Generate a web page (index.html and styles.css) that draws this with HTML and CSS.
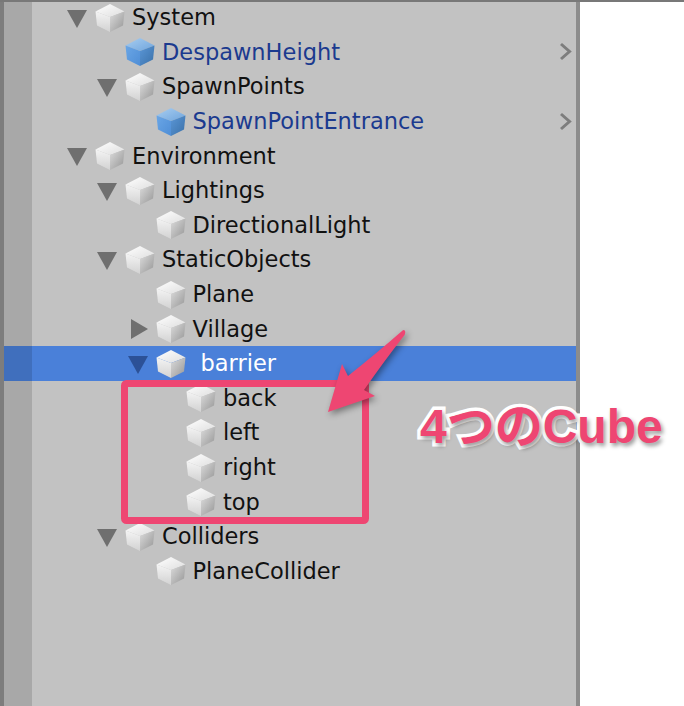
FILE: index.html
```html
<!DOCTYPE html>
<html lang="en">
<head>
    <meta charset="UTF-8">
    <meta name="viewport" content="width=device-width, initial-scale=1.0">
    <title>Hierarchy</title>
    <link rel="stylesheet" href="styles.css">
</head>
<body>
    <svg class="defs" width="0" height="0">
        <defs>
            <linearGradient id="top-grey" x1="0" y1="0" x2="1" y2="1">
                <stop offset="0" stop-color="#ffffff"/>
                <stop offset="1" stop-color="#dedede"/>
            </linearGradient>
            <linearGradient id="left-grey" x1="0" y1="0" x2="0" y2="1">
                <stop offset="0" stop-color="#f4f4f4"/>
                <stop offset="1" stop-color="#d2d2d2"/>
            </linearGradient>
            <linearGradient id="right-grey" x1="0" y1="0" x2="1" y2="1">
                <stop offset="0" stop-color="#dcdcdc"/>
                <stop offset="1" stop-color="#949494"/>
            </linearGradient>
            <linearGradient id="top-blue" x1="0" y1="0" x2="1" y2="1">
                <stop offset="0" stop-color="#a8cdf0"/>
                <stop offset="1" stop-color="#6fa5dd"/>
            </linearGradient>
            <linearGradient id="left-blue" x1="0" y1="0" x2="1" y2="1">
                <stop offset="0" stop-color="#6aa6e6"/>
                <stop offset="1" stop-color="#4f8ed6"/>
            </linearGradient>
            <linearGradient id="right-blue" x1="0" y1="0" x2="1" y2="1">
                <stop offset="0" stop-color="#5a96d6"/>
                <stop offset="1" stop-color="#3a70a8"/>
            </linearGradient>
            <symbol id="cube" viewBox="0 0 30 28">
                <path d="M15 0 29.500 7.500 15 13 .5 7.500Z" fill="url(#top-grey)"/>
                <path d="M.5 7.500 15 13 15 28 2 21.500Z" fill="url(#left-grey)"/>
                <path d="M29.500 7.500 28 21.500 15 28 15 13Z" fill="url(#right-grey)"/>
            </symbol>
            <symbol id="cube-blue" viewBox="0 0 30 28">
                <path d="M15 0 29.500 7.500 15 13 .5 7.500Z" fill="url(#top-blue)"/>
                <path d="M.5 7.500 15 13 15 28 2 21.500Z" fill="url(#left-blue)"/>
                <path d="M29.500 7.500 28 21.500 15 28 15 13Z" fill="url(#right-blue)"/>
            </symbol>
        </defs>
    </svg>

    <div class="window">
        <div class="panel">
            <ul class="tree">
                <li class="row depth-0"><span class="twisty open"></span><svg class="cube"><use href="#cube"/></svg><span class="name">System</span></li>
                <li class="row depth-1 prefab"><span class="twisty"></span><svg class="cube"><use href="#cube-blue"/></svg><span class="name">DespawnHeight</span><svg class="chevron" viewBox="0 0 13 19"><path d="M2 2 10.500 9.500 2 17"/></svg></li>
                <li class="row depth-1"><span class="twisty open"></span><svg class="cube"><use href="#cube"/></svg><span class="name">SpawnPoints</span></li>
                <li class="row depth-2 prefab"><span class="twisty"></span><svg class="cube"><use href="#cube-blue"/></svg><span class="name">SpawnPointEntrance</span><svg class="chevron" viewBox="0 0 13 19"><path d="M2 2 10.500 9.500 2 17"/></svg></li>
                <li class="row depth-0"><span class="twisty open"></span><svg class="cube"><use href="#cube"/></svg><span class="name">Environment</span></li>
                <li class="row depth-1"><span class="twisty open"></span><svg class="cube"><use href="#cube"/></svg><span class="name">Lightings</span></li>
                <li class="row depth-2"><span class="twisty"></span><svg class="cube"><use href="#cube"/></svg><span class="name">DirectionalLight</span></li>
                <li class="row depth-1"><span class="twisty open"></span><svg class="cube"><use href="#cube"/></svg><span class="name">StaticObjects</span></li>
                <li class="row depth-2"><span class="twisty"></span><svg class="cube"><use href="#cube"/></svg><span class="name">Plane</span></li>
                <li class="row depth-2"><span class="twisty closed"></span><svg class="cube"><use href="#cube"/></svg><span class="name">Village</span></li>
                <li class="row depth-2 selected"><span class="twisty open"></span><svg class="cube"><use href="#cube"/></svg><span class="name">barrier</span></li>
                <li class="row depth-3"><span class="twisty"></span><svg class="cube"><use href="#cube"/></svg><span class="name">back</span></li>
                <li class="row depth-3"><span class="twisty"></span><svg class="cube"><use href="#cube"/></svg><span class="name">left</span></li>
                <li class="row depth-3"><span class="twisty"></span><svg class="cube"><use href="#cube"/></svg><span class="name">right</span></li>
                <li class="row depth-3"><span class="twisty"></span><svg class="cube"><use href="#cube"/></svg><span class="name">top</span></li>
                <li class="row depth-1"><span class="twisty open"></span><svg class="cube"><use href="#cube"/></svg><span class="name">Colliders</span></li>
                <li class="row depth-2"><span class="twisty"></span><svg class="cube"><use href="#cube"/></svg><span class="name">PlaneCollider</span></li>
            </ul>
        </div>
    </div>

    <!-- Annotations drawn on top of the screenshot -->
    <svg class="marks" viewBox="0 0 684 706">
        <rect class="mark-box" x="124.500" y="383.500" width="241" height="137" rx="2"/>
        <path class="mark-arrow" d="M405 331Q406 334 403 337Q385 360 364 390L375 396 328 412 342 364 348 376Q378 352 402 331Q404 329 405 331Z"/>
    </svg>
    <div class="callout">4つのCube</div>
</body>
</html>
```

FILE: styles.css
```css
/* Basic Reset */
* { margin: 0; padding: 0; box-sizing: border-box; }
html, body { height: 100%; overflow: hidden; }
body { position: relative; background-color: #fff; font-family: "DejaVu Sans", sans-serif; }
.defs { position: absolute; }

/* Window frame */
.window { height: 706px; border-top: 2px solid #787878; }
.panel {
    position: relative;
    width: 580px;
    height: 100%;
    background-color: #c2c2c2;
    border-left: 4px solid #7d7d7d;
    border-right: 4px solid #8c8c8c;
    overflow: hidden;
}

/* Darker gutter on the left, runs over the selected row too */
.panel::before {
    content: "";
    position: absolute;
    top: 0;
    left: 0;
    bottom: 0;
    width: 28px;
    background-color: rgba(0, 0, 0, 0.13);
}

/* Tree rows */
.tree { list-style: none; margin-top: -2px; }
.row { display: flex; align-items: center; height: 34.6px; font-size: 22.500px; color: #111; }
.depth-0 { padding-left: 63px; }
.depth-1 { padding-left: 93px; }
.depth-2 { padding-left: 123.500px; }
.depth-3 { padding-left: 154px; }
.prefab { color: #1b3a8f; }
.selected { background-color: #4a80d9; color: #fff; }
.selected .name { margin-left: 15px; }
.selected .twisty.open { border-top-color: #2c5197; }

.twisty { flex: none; width: 20px; margin-right: 8px; }
.twisty.open {
    height: 0;
    border-left: 10px solid transparent;
    border-right: 10px solid transparent;
    border-top: 18px solid #6f6f6f;
    margin-top: 3px;
}
.twisty.closed {
    width: 0;
    height: 0;
    margin-left: 3px;
    margin-right: 8px;
    border-top: 10px solid transparent;
    border-bottom: 10px solid transparent;
    border-left: 17px solid #6f6f6f;
}

.cube { flex: none; width: 30px; height: 28px; margin-top: 1px; filter: blur(0.3px); }
.name { margin-left: 7px; white-space: nowrap; }
.chevron { flex: none; width: 13px; height: 19px; margin-left: auto; margin-right: 4px; fill: none; stroke: #7d7d7d; stroke-width: 3; }

/* Annotations */
.marks { position: absolute; top: 0; left: 0; width: 684px; height: 706px; }
.mark-box { fill: none; stroke: #ee4672; stroke-width: 7; }
.mark-arrow { fill: #ee4672; filter: drop-shadow(2px 3px 3px rgba(0, 0, 0, 0.4)); }
.callout {
    position: absolute;
    top: 397px;
    left: 420px;
    font-family: "Liberation Sans", "Noto Sans CJK JP", sans-serif;
    font-size: 48px;
    font-weight: bold;
    line-height: 60px;
    white-space: nowrap;
    color: #ee4672;
    -webkit-text-stroke: 7px #fff;
    paint-order: stroke fill;
    text-shadow: 2px 3px 4px rgba(0, 0, 0, 0.4);
}
```
